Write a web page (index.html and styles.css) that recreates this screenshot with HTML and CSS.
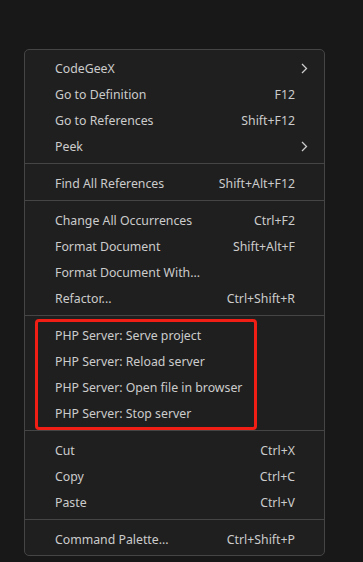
FILE: index.html
```html
<!DOCTYPE html>
<html>
<head>
<meta charset="utf-8">
<link rel="stylesheet" href="styles.css">
</head>
<body>
<div class="menu">
  <div class="row"><span class="label">CodeGeeX</span><span class="chev"><svg width="7" height="11" viewBox="0 0 7 11"><path d="M1 1 L5.5 5.5 L1 10" fill="none" stroke="#cccccc" stroke-width="1.3"/></svg></span></div>
  <div class="row"><span class="label">Go to Definition</span><span class="key">F12</span></div>
  <div class="row"><span class="label">Go to References</span><span class="key">Shift+F12</span></div>
  <div class="row"><span class="label">Peek</span><span class="chev"><svg width="7" height="11" viewBox="0 0 7 11"><path d="M1 1 L5.5 5.5 L1 10" fill="none" stroke="#cccccc" stroke-width="1.3"/></svg></span></div>
  <div class="sep"></div>
  <div class="row"><span class="label">Find All References</span><span class="key">Shift+Alt+F12</span></div>
  <div class="sep"></div>
  <div class="row"><span class="label">Change All Occurrences</span><span class="key">Ctrl+F2</span></div>
  <div class="row"><span class="label">Format Document</span><span class="key">Shift+Alt+F</span></div>
  <div class="row"><span class="label">Format Document With...</span></div>
  <div class="row"><span class="label">Refactor...</span><span class="key">Ctrl+Shift+R</span></div>
  <div class="sep"></div>
  <div class="group highlight">
    <div class="row"><span class="label">PHP Server: Serve project</span></div>
    <div class="row"><span class="label">PHP Server: Reload server</span></div>
    <div class="row"><span class="label">PHP Server: Open file in browser</span></div>
    <div class="row"><span class="label">PHP Server: Stop server</span></div>
  </div>
  <div class="sep"></div>
  <div class="row"><span class="label">Cut</span><span class="key">Ctrl+X</span></div>
  <div class="row"><span class="label">Copy</span><span class="key">Ctrl+C</span></div>
  <div class="row"><span class="label">Paste</span><span class="key">Ctrl+V</span></div>
  <div class="sep"></div>
  <div class="row"><span class="label">Command Palette...</span><span class="key">Ctrl+Shift+P</span></div>
</div>
</body>
</html>
```
FILE: styles.css
```css
html, body {
  margin: 0;
  background: #181818;
}
body {
  padding: 49px 0 0 24px;
  font-family: "Noto Sans", "Open Sans", sans-serif;
  font-size: 12.3px;
  color: #cccccc;
}
.menu {
  box-sizing: border-box;
  width: 301px;
  height: 507px;
  background: #1f1f1f;
  border: 1px solid #454545;
  border-radius: 5px;
  padding: 5px 0 2px;
}
.row {
  display: flex;
  align-items: center;
  height: 26px;
  padding: 0 29px 0 30px;
  white-space: nowrap;
}
.label {
  flex: 1;
}
.key {
  text-align: right;
}
.chev {
  display: flex;
  margin-right: -13px;
}
.sep {
  margin: 4px 0 6px;
  border-top: 1px solid #454545;
}
.group {
  position: relative;
}
.highlight::after {
  content: "";
  position: absolute;
  left: 10px;
  top: -3px;
  width: 222px;
  height: 111px;
  box-sizing: border-box;
  border: 3px solid #f01e14;
  border-radius: 4px;
}
```
